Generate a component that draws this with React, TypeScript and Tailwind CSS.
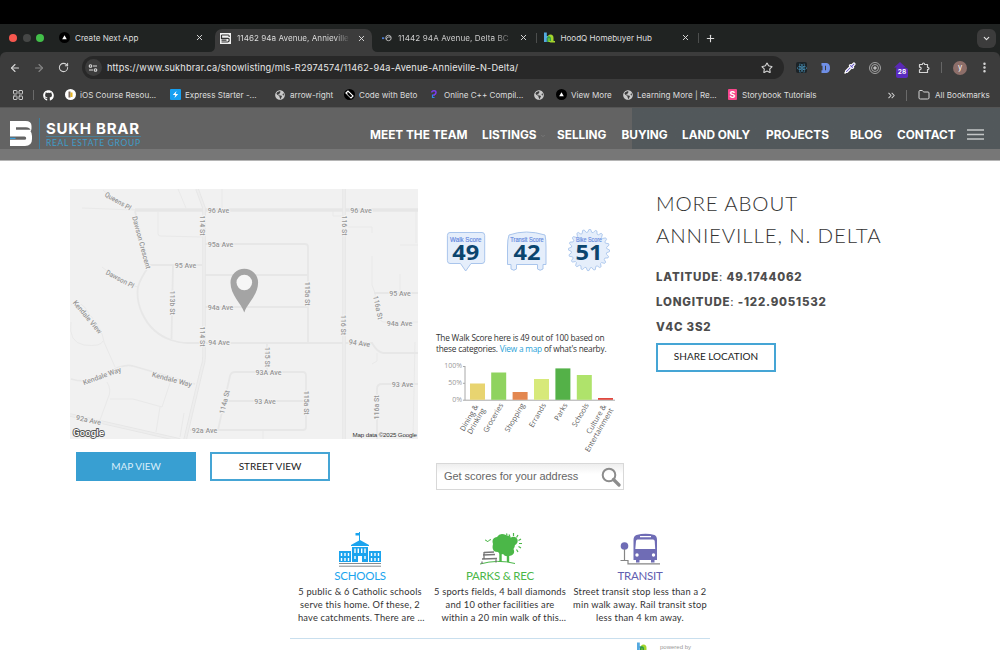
import React from "react";
import {
  ArrowLeft,
  ArrowRight,
  ChevronDown,
  ChevronsRight,
  EllipsisVertical,
  Folder,
  LayoutGrid,
  Pipette,
  Plus,
  RotateCw,
  Star,
  X,
} from "lucide-react";
import { FaGithub, FaReact, FaGlobeAmericas } from "react-icons/fa";

/* ---------- browser chrome ---------- */

function CloseIcon() {
  return <X className="size-[9px] shrink-0 text-[#d8d8d8]" strokeWidth={2.6} />;
}

function Triangle() {
  return (
    <svg viewBox="0 0 10 10" className="size-[11px] shrink-0">
      <circle cx="5" cy="5" r="5" fill="#000" />
      <path d="M5 3 L7.1 6.6 H2.9 Z" fill="#fff" />
    </svg>
  );
}

function BrandFavicon() {
  return (
    <svg viewBox="0 0 11 11" className="size-[11px] shrink-0">
      <rect width="11" height="11" fill="#f1f1f1" />
      <path d="M1.500 2H8.500Q9.200 2 9.200 4M1.500 2V5.300H8Q9.200 5.300 9.200 7T7.800 9H1.500M1.500 7.200H6.500" fill="none" stroke="#333" strokeWidth="1.200" />
    </svg>
  );
}

function HoodIcon({ className }: { className: string }) {
  return (
    <svg viewBox="0 0 11 11" className={className}>
      <path d="M0 .5h2.800v3.500h2v2H2.800V10H0z" fill="#54a9e0" />
      <path d="M3.500 10V6Q3.500 2.500 6.500 2.500T9.500 6V9H11V10.500H6.500L5.500 10Z" fill="#a3d52d" />
      <path d="M3 10V5.500Q4 3.500 6 4.500Q7.300 5.300 7 7.500V9H5.500V6.500Q5 5.500 4.500 6.500V10Z" fill="#2f9d4a" />
    </svg>
  );
}

function TabStrip() {
  return (
    <div className="flex h-7 shrink-0 items-center bg-[#202322]">
      <div className="flex w-[59px] items-center gap-[5.5px] pl-[9px]">
        <span className="size-2 rounded-full bg-[#f6574e]" />
        <span className="size-2 rounded-full bg-[#454746]" />
        <span className="size-2 rounded-full bg-[#42bf49]" />
      </div>
      <div className="flex w-[156px] items-center">
        <Triangle />
        <span className="ml-[5px] w-[120px]">Create Next App</span>
        <CloseIcon />
      </div>
      <div className="relative mt-[5px] flex h-[23px] w-[157px] items-center rounded-t-[7px] bg-[#3c3c3c] pb-[5px] pl-[5px]">
        <BrandFavicon />
        <span className="ml-[6px] w-[112px] bg-linear-to-r from-[#e6e6e6] from-88% to-[#4a4a4a] bg-clip-text tracking-[0.004em] text-transparent">
          11462 94a Avenue, Annieville
        </span>
        <span className="ml-[8px]">
          <CloseIcon />
        </span>
        <svg viewBox="0 0 6 6" className="absolute bottom-0 -left-[6px] size-[6px]">
          <path d="M6 0V6H0Q6 6 6 0Z" fill="#3c3c3c" />
        </svg>
        <svg viewBox="0 0 6 6" className="absolute -right-[6px] bottom-0 size-[6px]">
          <path d="M0 0V6H6Q0 6 0 0Z" fill="#3c3c3c" />
        </svg>
      </div>
      <div className="flex w-[164px] items-center pl-[10px]">
        <svg viewBox="0 0 10 8" className="h-[8px] w-[10px] shrink-0">
          <rect y="3.300" width="2.200" height="1.800" fill="#4a7bd0" />
          <circle cx="6.500" cy="4" r="2.700" fill="none" stroke="#b8b8b8" strokeWidth="1" />
          <path d="M4 5q2-3 5-2" fill="none" stroke="#b8b8b8" strokeWidth="1" />
        </svg>
        <span className="ml-[6px] w-[112px] bg-linear-to-r from-[#d8d8d8] from-86% to-[#555] bg-clip-text tracking-[0.01em] text-transparent">
          11442 94A Avenue, Delta BC
        </span>
        <span className="ml-[9px]">
          <CloseIcon />
        </span>
      </div>
      <div className="flex w-[162px] items-center">
        <span className="h-[10px] w-px bg-[#4c4e4d]" />
        <HoodIcon className="ml-[7px] size-[11px] shrink-0" />
        <span className="ml-[5.500px] w-[120.500px] tracking-[-0.002em]">HoodQ Homebuyer Hub</span>
        <CloseIcon />
      </div>
      <span className="h-[10px] w-px bg-[#4c4e4d]" />
      <Plus className="ml-[6px] size-[11px] text-[#dcdcdc]" strokeWidth={2.400} />
      <div className="mr-[4px] ml-auto flex size-[19px] items-center justify-center rounded-[6px] bg-[#3c3c3c]">
        <ChevronDown className="size-[9px] text-[#e6e6e6]" strokeWidth={3} />
      </div>
    </div>
  );
}

function Toolbar() {
  return (
    <div className="flex h-[31px] shrink-0 items-center rounded-t-[6px] bg-[#3c3c3c]">
      <ArrowLeft className="ml-[9px] size-[12px] text-[#d5d5d5]" strokeWidth={2.200} />
      <ArrowRight className="ml-[12px] size-[12px] text-[#858585]" strokeWidth={2.200} />
      <RotateCw className="ml-[13px] size-[11px] text-[#d5d5d5]" strokeWidth={2.200} />
      <div className="ml-[13px] flex h-[23px] w-[702px] items-center rounded-full bg-[#282828] pl-[2.500px]">
        <span className="flex size-[17px] items-center justify-center rounded-full bg-[#3c3c3c]">
          <svg viewBox="0 0 10 10" className="size-[10px]" fill="none" stroke="#dcdcdc" strokeWidth="1.100">
            <circle cx="2.500" cy="3" r="1.300" />
            <path d="M5 3H9M1 7H5" />
            <circle cx="7.500" cy="7" r="1.300" />
          </svg>
        </span>
        <span className="ml-[5.500px] grow text-[9.200px] tracking-[0.018em] text-[#e8e8e8]">
          https://www.sukhbrar.ca/showlisting/mls-R2974574/11462-94a-Avenue-Annieville-N-Delta/
        </span>
        <Star className="mr-[11px] size-[12px] text-[#d5d5d5]" strokeWidth={2.200} />
      </div>
      <span className="ml-[12px] flex size-[11px] items-center justify-center rounded-[2px] bg-[#1c2327]">
        <FaReact className="size-[10px] text-[#4fa3cf]" />
      </span>
      <svg viewBox="0 0 9 10" className="ml-[14px] h-[10px] w-[9px]">
        <path d="M.5 0H5.500Q9 .4 9 5T5.500 10H.5V7.300H1.500V2.700H.5ZM4 2.700V7.300H5V2.700Z" fill="#6f8fe6" fillRule="evenodd" />
      </svg>
      <Pipette className="ml-[14px] size-[12px] fill-[#5b4bc4] text-white" strokeWidth={2.400} />
      <svg viewBox="0 0 12 12" className="ml-[13px] size-[12px]" fill="none" stroke="#bdbdbd" strokeWidth=".8">
        <circle cx="6" cy="6" r="5.500" />
        <circle cx="6" cy="6" r="3.500" />
        <circle cx="6" cy="6" r="1.300" fill="#bdbdbd" />
      </svg>
      <div className="relative ml-[13px] h-[16px] w-[15px]">
        <svg viewBox="0 0 12 7" className="absolute top-[2px] left-0 h-[7px] w-[12px]">
          <path d="M6 0L12 5.500H9.500V7H2.500V5.500H0Z" fill="#5a28b5" />
        </svg>
        <span className="absolute top-[8px] left-[2px] flex h-[10px] w-[12px] items-center justify-center rounded-[2px] bg-[#5a2bc0] text-[6.500px] font-bold text-white">
          28
        </span>
      </div>
      <svg viewBox="0 0 12 12" className="ml-[9px] size-[12px]" fill="none" stroke="#d5d5d5" strokeWidth="1.200" strokeLinejoin="round">
        <path d="M1.500 2.500H4.300Q4.500 1 5.500 1T6.700 2.500H9.500V5.300Q11 5.500 11 6.500T9.500 7.700V10.500H1.500V7.800Q3.200 7.600 3.200 6.500T1.500 5.200Z" />
      </svg>
      <span className="ml-[11px] h-[11px] w-px bg-[#666]" />
      <span className="ml-[11px] flex size-[14px] items-center justify-center rounded-full bg-[#8d6e69] text-[7.500px] text-white">y</span>
      <EllipsisVertical className="ml-[11px] size-[13px] text-[#dcdcdc]" strokeWidth={2.600} />
    </div>
  );
}

function Bookmark({ icon, label, className }: { icon: React.ReactNode; label?: string; className: string }) {
  return (
    <div className={`flex shrink-0 items-center ${className}`}>
      {icon}
      {label && <span>{label}</span>}
    </div>
  );
}

function GlobeIcon() {
  return <FaGlobeAmericas className="size-[10px] shrink-0 text-[#c9c9c9]" />;
}

function BookmarksBar() {
  return (
    <div className="flex h-6 shrink-0 items-center bg-[#3c3c3c] text-[8.100px] text-[#dcdcdc]">
      <LayoutGrid className="ml-[12px] size-[12px] text-[#c8c8c8]" strokeWidth={2} />
      <span className="mr-[9px] ml-[9px] h-[10px] w-px bg-[#6a6a6a]" />
      <Bookmark className="w-[22px]" icon={<FaGithub className="size-[11px] text-white" />} />
      <Bookmark
        className="w-[105px] gap-[4px]"
        label="iOS Course Resou..."
        icon={
          <svg viewBox="0 0 11 11" className="size-[11px]">
            <circle cx="5.500" cy="5.500" r="5.500" fill="#fff" />
            <rect x="3.500" y="2.500" width="2" height="6" fill="#7c6a5c" />
            <rect x="5.500" y="3.500" width="2" height="4.500" fill="#e4b21f" />
          </svg>
        }
      />
      <Bookmark
        className="w-[105px] gap-[4px]"
        label="Express Starter -..."
        icon={
          <svg viewBox="0 0 11 11" className="size-[11px]">
            <rect width="11" height="11" rx="1" fill="#16a0f2" />
            <path d="M6.500 2L2.800 6H5.300L4.500 9L8.200 5H5.700Z" fill="#fff" />
          </svg>
        }
      />
      <Bookmark className="w-[69px] gap-[5px]" label="arrow-right" icon={<GlobeIcon />} />
      <Bookmark
        className="w-[86px] gap-[4px]"
        label="Code with Beto"
        icon={
          <svg viewBox="0 0 11 11" className="size-[11px]">
            <circle cx="5.500" cy="5.500" r="5.500" fill="#000" />
            <path d="M2 4L4 2L9 7L7 9Z" fill="none" stroke="#fff" strokeWidth="1.200" />
            <path d="M4 4.500L7 7.500" stroke="#000" strokeWidth="2" />
          </svg>
        }
      />
      <Bookmark
        className="w-[104px] gap-[7px]"
        label="Online C++ Compil..."
        icon={
          <svg viewBox="0 0 6 9" className="ml-[1px] h-[9px] w-[6px]">
            <path d="M.5 2.500Q1 .8 3 .8T5 2.500T3 4.800V6" fill="none" stroke="#7a3cf0" strokeWidth="1.500" />
            <path d="M1.500 4.500V7.500H3.500" fill="none" stroke="#2f8ae6" strokeWidth="1.200" />
          </svg>
        }
      />
      <Bookmark className="w-[22px]" icon={<GlobeIcon />} />
      <Bookmark className="w-[67px] gap-[4px]" label="View More" icon={<Triangle />} />
      <Bookmark className="w-[105px] gap-[4px]" label="Learning More | Re..." icon={<GlobeIcon />} />
      <Bookmark
        className="w-[159px] gap-[5px]"
        label="Storybook Tutorials"
        icon={
          <span className="flex h-[11px] w-[9px] items-center justify-center rounded-[1px] bg-[#f7478b] text-[9px] font-bold text-white">
            S
          </span>
        }
      />
      <ChevronsRight className="-ml-px size-[11px] text-[#d5d5d5]" strokeWidth={2.200} />
      <span className="mr-[11px] ml-[9px] h-[11px] w-px bg-[#6a6a6a]" />
      <Folder className="size-[12px] text-[#d5d5d5]" strokeWidth={2} />
      <span className="ml-[5px]">All Bookmarks</span>
    </div>
  );
}

/* ---------- site header ---------- */

const navItems = [
  { label: "MEET THE TEAM", width: "w-[112px]" },
  { label: "LISTINGS", width: "w-[75px]" },
  { label: "SELLING", width: "w-[64.500px]" },
  { label: "BUYING", width: "w-[60.500px]" },
  { label: "LAND ONLY", width: "w-[84px]" },
  { label: "PROJECTS", width: "w-[84px]" },
  { label: "BLOG", width: "w-[47px]" },
  { label: "CONTACT", width: "w-[70px]" },
];

function SiteHeader() {
  return (
    <header className="shrink-0">
      <div className="flex h-[42px] border-t border-[#555] bg-linear-to-r from-[#636363] from-[63.200%] to-[#52585b] to-[63.200%]">
        <div className="flex w-[370px] pt-[10px] pl-[10px]">
          <svg viewBox="0 0 22 25" className="mt-[3px] h-[25px] w-[22px]">
            <path
              d="M0 0H15.500Q21.500 0 21.500 5V7.500Q21.500 9 20.500 10.200Q22 12 22 15V18Q22 25 15 25H0V18.800H14.500Q16.200 18.800 16.200 17.200T14.500 15.600H0ZM6 6.200V8.800H20.500Q19.500 6.200 16 6.200Z"
              fill="#fff"
              fillRule="evenodd"
            />
            <path d="M0 17.400H5.500" stroke="#3aa0dc" strokeWidth="1.300" />
          </svg>
          <span className="ml-[7px] h-[31px] w-px bg-[#3f7f9f]" />
          <div className="ml-[6px] w-[95px]">
            <div className="mt-[3px] border-b border-[#4b7f98] font-[Inter] text-[15px] leading-[15px] font-bold tracking-[0.05em] text-white">SUKH BRAR</div>
            <div className="mt-[2px] text-[8.500px] leading-[9px] font-[Lato] tracking-[0.08em] text-[#3f9cc9]">REAL ESTATE GROUP</div>
          </div>
        </div>
        <nav className="flex items-center pt-[14px] font-[Inter] text-[11.800px] font-bold text-white">
          {navItems.map((item) => (
            <span key={item.label} className={`flex items-center ${item.width}`}>
              {item.label}
              {item.label === "LISTINGS" && <ChevronDown className="ml-[4px] size-[6px] text-[#7c7c7c]" strokeWidth={3} />}
            </span>
          ))}
          <svg viewBox="0 0 17 11" className="mb-[3px] h-[11px] w-[17px]">
            <path d="M0 1H17M0 5.500H17M0 10H17" stroke="#c4c6c7" strokeWidth="1.400" />
          </svg>
        </nav>
      </div>
      <div className="h-[12px] border-b border-[#b5b5b5] bg-[#777]" />
    </header>
  );
}

/* ---------- map ---------- */

type Label = { t: string; x: number; y: number; r?: number; w: number };

const labels: Label[] = [
  { t: "96 Ave", x: 218.5, y: 210, w: 21.5 },
  { t: "96 Ave", x: 361, y: 210, w: 21.5 },
  { t: "95a Ave", x: 220.5, y: 244.500, w: 25.500 },
  { t: "95 Ave", x: 185.5, y: 265.5, w: 21.5 },
  { t: "94a Ave", x: 220.5, y: 307, w: 25.500 },
  { t: "94 Ave", x: 219, y: 342.700, w: 21.5 },
  { t: "93A Ave", x: 268.5, y: 372.500, w: 26 },
  { t: "93 Ave", x: 265, y: 401.700, w: 21.5 },
  { t: "92a Ave", x: 204.500, y: 430.300, w: 25.500 },
  { t: "92a Ave", x: 88.500, y: 420, r: 12, w: 25.500 },
  { t: "95 Ave", x: 400, y: 293.200, w: 21.5 },
  { t: "94a Ave", x: 399.500, y: 323, w: 25.500 },
  { t: "94 Ave", x: 359.500, y: 343.200, r: 7, w: 21.5 },
  { t: "93 Ave", x: 402.500, y: 384, w: 21.5 },
  { t: "114 St", x: 202.500, y: 225.500, r: 90, w: 20 },
  { t: "114 St", x: 202, y: 336.500, r: 90, w: 20 },
  { t: "113b St", x: 172.500, y: 302.700, r: 90, w: 24 },
  { t: "115a St", x: 307.700, y: 293.700, r: 90, w: 24 },
  { t: "115a St", x: 306, y: 402.700, r: 90, w: 24 },
  { t: "115 St", x: 267.300, y: 357, r: 90, w: 20 },
  { t: "116 St", x: 344.500, y: 225.500, r: 90, w: 20 },
  { t: "116 St", x: 343.700, y: 325, r: 90, w: 20 },
  { t: "116a St", x: 378, y: 307.500, r: 78, w: 24 },
  { t: "116a St", x: 376.300, y: 407.500, r: -90, w: 24 },
  { t: "114a St", x: 224.500, y: 402, r: -76, w: 24 },
  { t: "Queens Pl", x: 118, y: 201.200, r: 30, w: 29 },
  { t: "Dawson Crescent", x: 141.500, y: 242.500, r: 75, w: 54 },
  { t: "Dawson Pl", x: 120, y: 279, r: 28, w: 31 },
  { t: "Kendale View", x: 87.500, y: 317, r: 50, w: 41 },
  { t: "Kendale Way", x: 102, y: 376, r: -20, w: 40 },
  { t: "Kendale Way", x: 172, y: 379.500, r: 15, w: 41 },
];

const minorRoads =
  "M82 208L135 210M103 190Q117 205 135 210M178 189L186 208M222 189V209M158 212V234Q158 236 161 236L202 237M102 267Q122 284 138 287M71 305Q80 297 90 315Q102 328 104 342L115 367M71 322Q68 342 84 345Q101 347 103 341M107 382Q112 390 108 398L100 420M110 399L133 399L162 407L171 380M160 407L156 432M333 211V216H342M348 227H372V233M416 210V243M400 245H418M400 274V291M372 256V285L375 293L378 315Q380 322 384 322H418M377 353V361L372 364M415 342L413 439M263 431V439M184 413L180 437";

const roads =
  "M135 211Q138 225 145 250L149 266Q140 279 138 287Q136 300 142 313Q151 333 171 340Q180 343 187 343H372Q377 352 383 353H418M150 265H202M173 265L171.500 339M205 244H305Q308 244 308 247V343M205 275H308M205 307H308M267 343V372M218 430L230 376Q231 372 235 372H303Q306 372 306 376V427Q306 430 303 430H190M226 401H306M374 293H418M377 439V389Q377 384 382 384H418M71 379Q88 384 102 376Q122 363 133 366L195 384";

function LocationMap() {
  return (
    <svg viewBox="70 189 348 250" className="h-[250px] w-[348px] bg-[#f1f1f1]" fontFamily="Roboto, sans-serif" fontSize="7.200" fontWeight="500">
      <path d={minorRoads} fill="none" stroke="#e9e9e9" strokeWidth="1" />
      <path d={roads} fill="none" stroke="#e7e7e7" strokeWidth="1.800" />
      <g fill="none">
        <path d="M135 210H418M197 189L204 208V357Q204 363 202 368L185 440M344 189V439M70 415L180 440" stroke="#e6e6e6" strokeWidth="3.600" />
        <path d="M197 189L204 208V357Q204 363 202 368L185 440M344 189V439M70 415L180 440" stroke="#ededed" strokeWidth="1.800" />
      </g>
      {labels.map((l, i) => (
        <text
          key={i}
          x={l.x}
          y={l.y + 2.500}
          transform={`rotate(${l.r ?? 0} ${l.x} ${l.y})`}
          textAnchor="middle"
          textLength={l.w}
          lengthAdjust="spacingAndGlyphs"
          fill="#979797"
          stroke="#f3f3f3"
          strokeWidth="2"
          paintOrder="stroke"
        >
          {l.t}
        </text>
      ))}
      <path
        d="M244.300 312.500C241 303 230.500 295 230.500 282.500A13.800 13.800 0 0 1 258.100 282.500C258.100 295 247.600 303 244.300 312.500Z"
        fill="#a4a4a4"
      />
      <circle cx="244.300" cy="282.500" r="7.800" fill="#f6f6f6" />
      <text x="73" y="436" fontSize="9.500" fontWeight="500" textLength="31" fill="#fff" stroke="#555" strokeWidth="1.800" paintOrder="stroke">
        Google
      </text>
      <text x="352.500" y="437.300" fontFamily="Liberation Sans, sans-serif" fontWeight="400" fontSize="6.200" textLength="64.500" fill="#333">
        Map data ©2025 Google
      </text>
    </svg>
  );
}

/* ---------- walk score ---------- */

const gear = Array.from({ length: 80 }, (_, i) => {
  const a = (i / 80) * Math.PI * 2;
  const r = i % 4 < 2 ? 20.600 : 17.800;
  return `${(21 + r * Math.cos(a)).toFixed(2)},${(21 + r * Math.sin(a)).toFixed(2)}`;
}).join(" ");

function BadgeText({ x, label, w, score }: { x: number; label: string; w: number; score: string }) {
  return (
    <>
      <text x={x} y="13.400" textAnchor="middle" textLength={w} lengthAdjust="spacingAndGlyphs" fontFamily="Liberation Sans, sans-serif" fontSize="6.800" fill="#5f86dd" stroke="#5f86dd" strokeWidth=".15">
        {label}
      </text>
      <text x={x} y="30.800" textAnchor="middle" textLength="27" lengthAdjust="spacingAndGlyphs" fontFamily="Open Sans, sans-serif" fontWeight="700" fontSize="20.500" fill="#0b456e">
        {score}
      </text>
    </>
  );
}

function ScoreBadges() {
  return (
    <div className="flex pl-[10px]">
      <svg viewBox="0 0 40 43" className="h-[43px] w-[40px]">
        <path d="M4 3.500H36Q38.700 3.500 38.700 6.500V31.500Q38.700 34.500 36 34.500H25L19.700 42L14.500 34.500H4Q1.400 34.500 1.400 31.500V6.500Q1.400 3.500 4 3.500Z" fill="#e5eefb" stroke="#a9c5ec" />
        <BadgeText x={19.8} label="Walk Score" w={31.500} score="49" />
      </svg>
      <svg viewBox="0 0 42 43" className="ml-[20px] h-[43px] w-[42px]">
        <path d="M3 6Q20 0 39 6Q40 10 40 18V35.500H37V40Q34 42.500 31.500 40V35.500H10.500V40Q8 42.500 5 40V35.500H1.500V18Q1.500 10 3 6Z" fill="#e5eefb" stroke="#a9c5ec" />
        <BadgeText x={21} label="Transit Score" w={33.500} score="42" />
      </svg>
      <svg viewBox="0 0 42 43" className="ml-[20px] h-[43px] w-[42px]">
        <polygon points={gear} fill="#e5eefb" stroke="#a9c5ec" strokeWidth=".9" strokeLinejoin="round" />
        <BadgeText x={21} label="Bike Score" w={26} score="51" />
      </svg>
    </div>
  );
}

const bars = [
  { x: 34, top: 21.500, fill: "#e8d470", label: ["Dining &", "Drinking"] },
  { x: 55.200, top: 10.500, fill: "#8fd35f", label: ["Groceries"] },
  { x: 76.600, top: 30, fill: "#e3874f", label: ["Shopping"] },
  { x: 98, top: 17, fill: "#d7e97a", label: ["Errands"] },
  { x: 119.400, top: 6.400, fill: "#54b148", label: ["Parks"] },
  { x: 140.800, top: 13, fill: "#afe36b", label: ["Schools"] },
  { x: 162, top: 36, fill: "#e0483f", label: ["Culture &", "Entertainment"] },
];

function ScoreChart() {
  return (
    <svg viewBox="0 0 188 98" className="h-[98px] w-[188px]" fontFamily="Open Sans, sans-serif" fontSize="7.300" fill="#5c5c5c">
      <g fill="#999" textAnchor="end" fontSize="7">
        <text x="26" y="6">100%</text>
        <text x="26" y="23">50%</text>
        <text x="26" y="39.700">0%</text>
      </g>
      <path d="M27 4.500H29M27 21.300H29M29 4V38.200H179M27 38.200H29" fill="none" stroke="#a8a8a8" />
      {bars.map((b) => (
        <g key={b.x}>
          <rect x={b.x} y={b.top} width="15" height={37.800 - b.top} fill={b.fill} />
          {b.label.map((line, i) => {
            const two = b.label.length === 2;
            const x = b.x + (two ? 8.500 + i * 7 : 12.300);
            const y = two ? 44.500 + i * 3.500 : 43;
            return (
              <text key={line} x={x} y={y} textAnchor="end" transform={`rotate(-60 ${x} ${y})`}>
                {line}
              </text>
            );
          })}
        </g>
      ))}
    </svg>
  );
}

function WalkScore() {
  return (
    <section className="w-[220px] pt-[68px]">
      <ScoreBadges />
      <p className="mt-[60px] font-['Open_Sans'] text-[8.300px] leading-[11px] tracking-[-0.026em] text-[#333]">
        The Walk Score here is 49 out of 100 based on
        <br />
        these categories. <span className="text-[#2a9fd8]">View a map</span> of what's nearby.
      </p>
      <div className="mt-[8px]">
        <ScoreChart />
      </div>
      <div className="mt-[3px] flex h-[27px] w-[188px] items-center border border-[#d8d8d8] bg-linear-to-b from-[#eeeeee] to-white to-40% pl-[7px] font-['Liberation_Sans'] text-[11px] tracking-[-0.005em] text-[#666]">
        <span className="w-[157px]">Get scores for your address</span>
        <svg viewBox="0 0 20 20" className="size-[20px]" fill="none" stroke="#8c8c8c">
          <circle cx="8" cy="8" r="6.300" strokeWidth="2" />
          <path d="M12.500 12.500L18 18" strokeWidth="3.200" strokeLinecap="round" />
        </svg>
      </div>
    </section>
  );
}

/* ---------- page content ---------- */

function ActionButton({ children, solid }: { children: React.ReactNode; solid?: boolean }) {
  return (
    <button
      className={`flex h-[29px] w-[120px] items-center justify-center border-2 pb-px font-[Lato] text-[10px] ${
        solid ? "border-[#389fd2] bg-[#389fd2] text-[#d9eefa]" : "border-[#45a5d5] bg-white text-[#222]"
      }`}
    >
      {children}
    </button>
  );
}

function SchoolIcon() {
  return (
    <svg viewBox="0 0 44 36" className="h-[36px] w-[44px]">
      <path d="M21.500 10V1" stroke="#1ba4ee" />
      <path d="M17.500 2H21.500V4.500H17.500Z" fill="#1ba4ee" />
      <path d="M22 9L31 14V15H13V14ZM14 16H30V31H14ZM1 20H13V31H1ZM31 20H43V31H31Z" fill="#1ba4ee" />
      <path d="M17 17.500V22M20.300 17.500V22M23.700 17.500V22M27 17.500V22M17 25V28M27 25V28M3.500 22V25M7 22V25M10.500 22V25M3.500 27V30M7 27V30M10.500 27V30M33.500 22V25M37 22V25M40.500 22V25M33.500 27V30M37 27V30M40.500 27V30" stroke="#fff" strokeWidth="1.400" />
      <path d="M20 25H24V31H20Z" fill="#fff" />
      <path d="M1 32.500H43M1 35.200H43" stroke="#858c90" strokeWidth="1" />
    </svg>
  );
}

function ParkIcon() {
  return (
    <svg viewBox="0 0 44 36" className="h-[36px] w-[44px]">
      <path d="M31 3.500L32 6M35.500 2V5M40 4L38.500 6.500M43 8L40.500 9.500M44 12.500H41M43 17L40.500 15.500M40 21L38.500 18.500M28.500 2.500L29 4" stroke="#4bb748" strokeWidth="1.200" />
      <circle cx="35.500" cy="10" r="4.200" fill="#4bb748" />
      <path d="M15 13Q13 7 19 6Q22 1 28 4Q33 5 34 9Q39 13 35.500 18Q38 24 31 25Q27 26 25 23Q22 24 20 21Q13 21 15 13Z" fill="#4bb748" />
      <path d="M22.500 19V31M30 22V31" stroke="#4bb748" strokeWidth="2.400" />
      <path d="M7 9Q9 9 9.500 11Q10.500 9 13 8.500" fill="none" stroke="#4bb748" />
      <path d="M2 33Q20 28 37 32.500" fill="none" stroke="#4bb748" />
      <path d="M6 21.500L16 21M5 24L17 23.500M4 28L19 27.500M4 30.500V33M18 27V31.500M6 21V28" stroke="#777" strokeWidth="1.300" fill="none" />
    </svg>
  );
}

function BusIcon() {
  return (
    <svg viewBox="0 0 44 36" className="h-[36px] w-[44px]">
      <circle cx="6.500" cy="15" r="3.800" fill="#6f6cb5" />
      <path d="M6.500 18V29M2.500 29.500H10V32.800H42" fill="none" stroke="#858585" strokeWidth="1.200" />
      <path d="M18.500 4Q27.500 1.500 36.500 4Q39 5 39 9V29H36.500V31.500H33V29H21.500V31.500H18V29H15.500V9Q15.500 5 18.500 4Z" fill="#6f6cb5" />
      <path d="M19.500 8.500H35Q36.500 8.500 36.700 10L37.200 18H17.300L18 10Q18.200 8.500 19.500 8.500ZM22 5H33V6.200H22Z" fill="#fff" />
      <circle cx="19" cy="24" r="1.700" fill="#fff" />
      <circle cx="35.500" cy="24" r="1.700" fill="#fff" />
    </svg>
  );
}

const facts = [
  { icon: <SchoolIcon />, title: "SCHOOLS", color: "text-[#1ba4ee]", lines: ["5 public & 6 Catholic schools", "serve this home. Of these, 2", "\u00a0have catchments. There are …"] },
  { icon: <ParkIcon />, title: "PARKS & REC", color: "text-[#4bb748]", lines: ["5 sports fields, 4 ball diamonds", "and 10 other facilities are", "\u00a0\u00a0\u00a0within a 20 min walk of this…"] },
  { icon: <BusIcon />, title: "TRANSIT", color: "text-[#6260b0]", lines: ["Street transit stop less than a 2", "min walk away. Rail transit stop", "less than 4 km away."] },
];

function NeighbourhoodFacts() {
  return (
    <section className="ml-[290px] w-[420px] font-[Lato]">
      <div className="grid h-[114px] grid-cols-3 border-b border-[#c9dfee] pt-[6px]">
        {facts.map((f) => (
          <div key={f.title} className="flex flex-col items-center">
            {f.icon}
            <h3 className={`text-[11.500px] leading-[17px] tracking-[-0.02em] ${f.color}`}>{f.title}</h3>
            <p className="mt-[1px] text-center text-[9.300px] leading-[13px] tracking-[0.022em] text-[#333]">
              {f.lines.map((line) => (
                <span key={line} className="block">
                  {line}
                </span>
              ))}
            </p>
          </div>
        ))}
      </div>
      <div className="flex pt-[3px] pl-[347px]">
        <HoodIcon className="size-[11px]" />
        <span className="ml-[12px] font-['Liberation_Sans'] text-[6px] leading-[10px] text-[#999]">powered by</span>
      </div>
    </section>
  );
}

function LocationInfo() {
  return (
    <section className="pt-[27px] text-[#4d4d4d]">
      <h2 className="font-[Lato] text-[20.500px] leading-[31.500px] font-light tracking-[0.041em] text-[#333]">
        MORE ABOUT
        <br />
        ANNIEVILLE, N. DELTA
      </h2>
      <div className="mt-[14px] font-[Inter] text-[11.500px] leading-[25.200px] font-extrabold tracking-[0.068em]">
        <p>
          LATITUDE<span className="font-normal">:</span> 49.1744062
        </p>
        <p>
          LONGITUDE<span className="font-normal">:</span> -122.9051532
        </p>
        <p>V4C 3S2</p>
      </div>
      <div className="mt-[2px]">
        <ActionButton>SHARE LOCATION</ActionButton>
      </div>
    </section>
  );
}

export default function App() {
  return (
    <div className="flex h-[650px] w-[1000px] flex-col overflow-hidden bg-white whitespace-nowrap">
      <div className="flex shrink-0 flex-col bg-[#202322] font-[Inter] text-[8.100px] text-[#dedede]">
        <div className="h-6 bg-black" />
        <TabStrip />
        <Toolbar />
        <BookmarksBar />
      </div>
      <SiteHeader />
      <main>
        <div className="flex h-[364px] pl-[70px]">
          <section className="w-[366px] pt-[28px]">
            <LocationMap />
            <div className="mt-[13px] flex gap-[14px] pl-[6px]">
              <ActionButton solid>MAP VIEW</ActionButton>
              <ActionButton>STREET VIEW</ActionButton>
            </div>
          </section>
          <WalkScore />
          <LocationInfo />
        </div>
        <NeighbourhoodFacts />
      </main>
    </div>
  );
}
